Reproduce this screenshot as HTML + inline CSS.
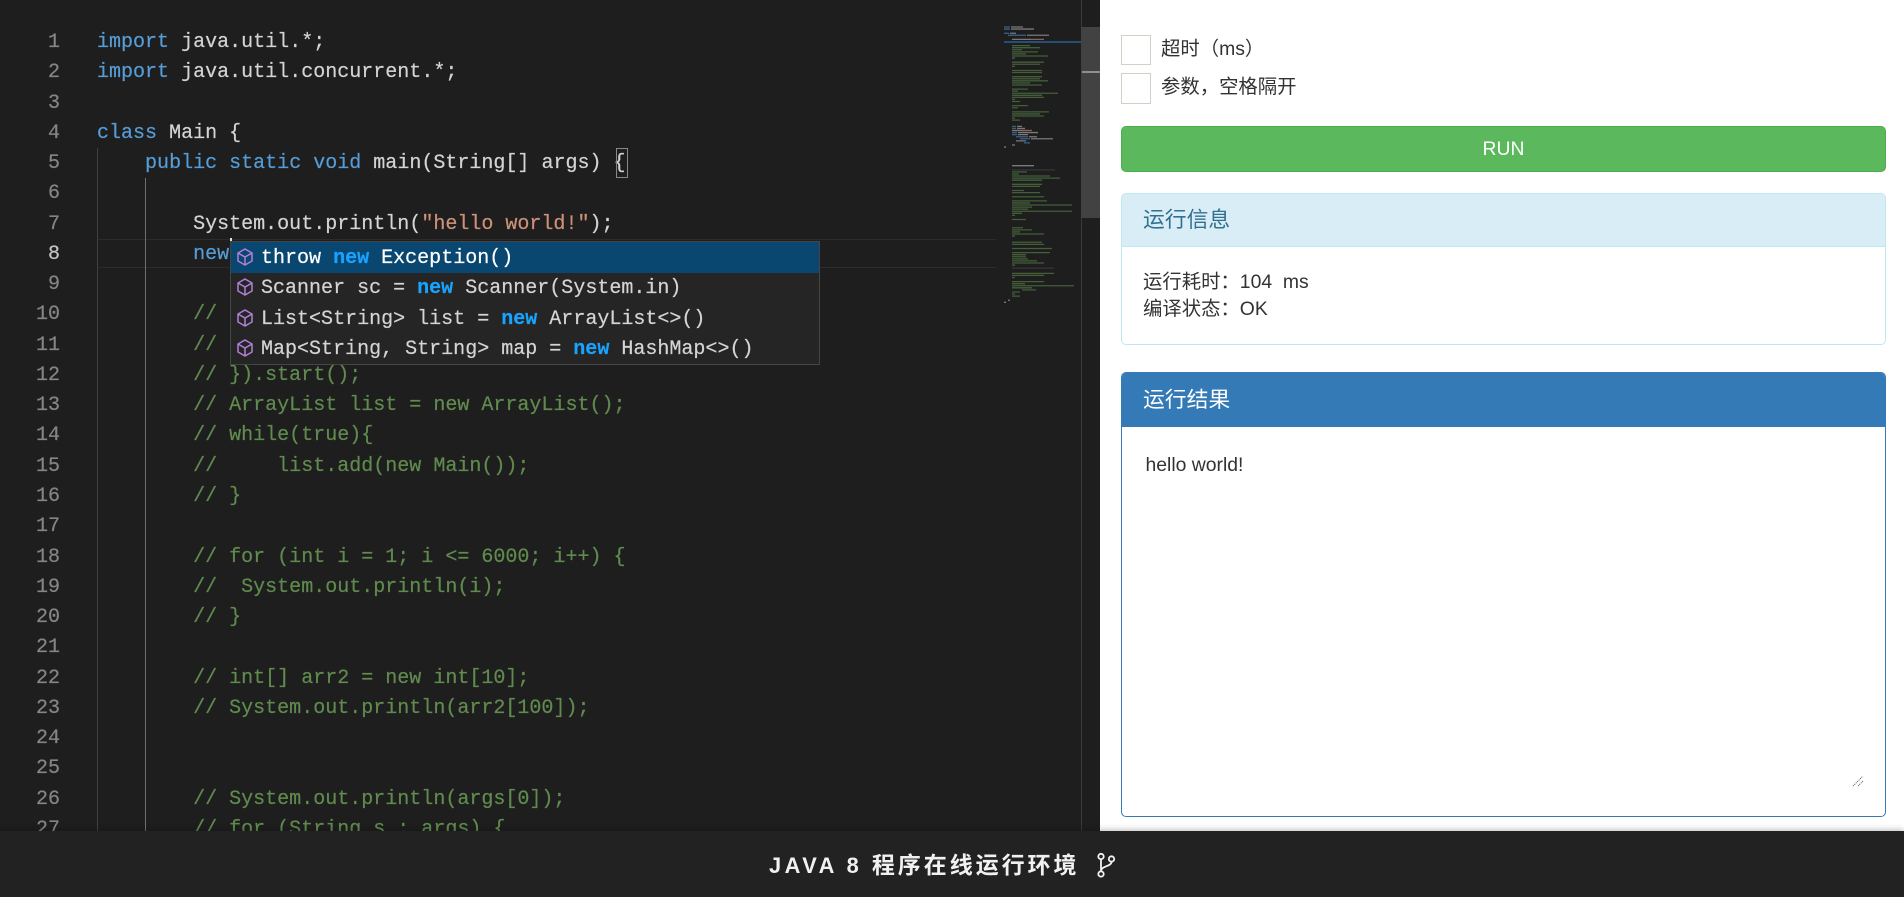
<!DOCTYPE html>
<html lang="zh"><head><meta charset="utf-8"><title>JAVA 8 程序在线运行环境</title>
<style>
html,body{margin:0;padding:0;width:1904px;height:897px;overflow:hidden;background:#fff}
*{box-sizing:border-box}
#ed{position:absolute;left:0;top:0;width:1100px;height:897px;background:#1e1e1e;overflow:hidden}
#nums,#code{position:absolute;top:28px;font:20.03px/30.27px "Liberation Mono","DejaVu Sans Mono",monospace;white-space:pre;-webkit-text-stroke:.2px}
#nums{left:0;width:60px;text-align:right;color:#858585}
#nums b{font-weight:normal;color:#c6c6c6}
#code{left:97px;color:#d4d4d4}
.k{color:#569cd6}.s{color:#ce9178}.c{color:#608b4e}
.g{position:absolute;width:1px;bottom:0}
#cur{position:absolute;left:97px;top:239px;width:899px;height:29px;border-top:1px solid #2c2c2c;border-bottom:1px solid #2c2c2c}
#br{position:absolute;left:616px;top:148px;width:12px;height:30px;border:1px solid #888}
#pop{position:absolute;left:230px;top:241px;width:590px;height:124px;background:#252526;border:1px solid #454545;font:20.03px/34px "Liberation Mono","DejaVu Sans Mono",monospace;color:#d4d4d4;-webkit-text-stroke:.2px}
#pop div{position:relative;height:30.25px;padding-left:30px;white-space:pre}
#pop div.sel{background:#094771;color:#fff;height:31px;margin-bottom:-.75px}
#pop b{color:#18a3ff}
#pop svg{position:absolute;left:4px;top:5px}
#caret{position:absolute;left:230px;top:238px;width:2px;height:4px;background:#e0e0e0}
#sb{position:absolute;left:1081px;top:27px;width:19px;height:191px;background:#424242}
#rl{position:absolute;left:1081px;top:0;width:1px;height:897px;background:#3a3a3a}
#rm{position:absolute;left:1082px;top:71px;width:18px;height:2px;background:#8f8f8f}
#hl{position:absolute;left:1004px;top:41px;width:77px;height:2.4px;background:#264f78}
#rp{position:absolute;left:1100px;top:0;width:804px;height:897px;background:#fff;font:19.36px/26.6px "Liberation Sans","Noto Sans CJK SC",sans-serif;color:#333}
.in{position:absolute;left:21px;width:30px;border:1px solid #d3d0c8;background:#fff}
.lb{position:absolute;left:61px;white-space:pre}
#run{position:absolute;left:21px;top:126px;width:765px;height:46px;background:#5cb85c;border:1px solid #4cae4c;border-radius:5px;color:#fff;text-align:center;line-height:45px}
.panel{position:absolute;left:21px;width:765px;border-radius:5px;background:#fff}
.head{position:absolute;left:0;top:0;width:100%;border-radius:4px 4px 0 0;font-size:21.8px;line-height:52px;padding-left:21px;white-space:pre}
#p1{top:193px;height:152px;border:1px solid #bce8f1}
#p1 .head{height:53px;background:#d9edf7;border-bottom:1px solid #bce8f1;color:#31708f}
#p1 .bd{position:absolute;left:21px;top:75px;white-space:pre}
#p2{top:372px;height:445px;border:1px solid #337ab7}
#p2 .head{height:54px;background:#337ab7;color:#fff;line-height:54px;top:0}
#p2 .bd{position:absolute;left:23.5px;top:79px}
#grip{position:absolute;left:1852px;top:775px}
#ft{position:absolute;left:0;top:831px;width:1904px;height:66px;background:#222;box-shadow:0 -1px 6px rgba(0,0,0,.28)}
#ft .t{position:absolute;left:769px;top:17px;font:bold 21.8px/34px "Liberation Sans","Noto Sans CJK SC",sans-serif;color:#f1f1f1;letter-spacing:3.5px;white-space:pre}
#ft .t span{font-size:23px;letter-spacing:2.95px}
#ft svg{position:absolute;left:1094px;top:19px}
</style></head><body>
<div id="ed">
<div id="cur"></div>
<div class="g" style="left:97px;top:148px;background:#404040"></div>
<div class="g" style="left:145px;top:178px;background:#707070"></div>
<div id="nums">1
2
3
4
5
6
7
<b>8</b>
9
10
11
12
13
14
15
16
17
18
19
20
21
22
23
24
25
26
27</div>
<div id="code"><span class="k">import</span> java.util.*;
<span class="k">import</span> java.util.concurrent.*;

<span class="k">class</span> Main {
    <span class="k">public</span> <span class="k">static</span> <span class="k">void</span> main(String[] args) {

        System.out.println(<span class="s">"hello world!"</span>);
        <span class="k">new</span>

        <span class="c">// new Thread(()-&gt;{</span>
        <span class="c">//     System.out.println();</span>
        <span class="c">// }).start();</span>
        <span class="c">// ArrayList list = new ArrayList();</span>
        <span class="c">// while(true){</span>
        <span class="c">//     list.add(new Main());</span>
        <span class="c">// }</span>

        <span class="c">// for (int i = 1; i &lt;= 6000; i++) {</span>
        <span class="c">//  System.out.println(i);</span>
        <span class="c">// }</span>

        <span class="c">// int[] arr2 = new int[10];</span>
        <span class="c">// System.out.println(arr2[100]);</span>


        <span class="c">// System.out.println(args[0]);</span>
        <span class="c">// for (String s : args) {</span></div>
<div id="br"></div>
<div id="caret"></div>
<div id="pop"><div class="sel"><svg width="20" height="20" viewBox="0 0 20 20" fill="none" stroke="#b180d7" stroke-width="1.5"><path d="M10 2l7 4v8l-7 4-7-4V6zM3 6l7 4 7-4M10 10v8"/></svg>throw <b>new</b> Exception()</div><div><svg width="20" height="20" viewBox="0 0 20 20" fill="none" stroke="#b180d7" stroke-width="1.5"><path d="M10 2l7 4v8l-7 4-7-4V6zM3 6l7 4 7-4M10 10v8"/></svg>Scanner sc = <b>new</b> Scanner(System.in)</div><div><svg width="20" height="20" viewBox="0 0 20 20" fill="none" stroke="#b180d7" stroke-width="1.5"><path d="M10 2l7 4v8l-7 4-7-4V6zM3 6l7 4 7-4M10 10v8"/></svg>List&lt;String&gt; list = <b>new</b> ArrayList&lt;&gt;()</div><div><svg width="20" height="20" viewBox="0 0 20 20" fill="none" stroke="#b180d7" stroke-width="1.5"><path d="M10 2l7 4v8l-7 4-7-4V6zM3 6l7 4 7-4M10 10v8"/></svg>Map&lt;String, String&gt; map = <b>new</b> HashMap&lt;&gt;()</div></div>
<div id="hl"></div>
<svg style="position:absolute;left:0;top:0" width="1100" height="897">
<g transform="translate(1004 27) scale(1 2.07)" fill="none" stroke-width=".62" opacity=".85">
<path stroke="#3f6f9c" d="M0 0h6M0 1h6M0 3h5M4 4h18M8 48h4M8 49h4M8 51h5M8 52h5M12 53h12M16 54h10M20 56h6"/>
<path stroke="#8a8a8a" d="M7 0h12M7 1h23M6 3h6M23 4h22M8 6h19M13 48h5M13 49h8M8 50h16M14 51h20M14 52h10M25 53h8M27 54h22M12 55h10M8 57h3M0 58h2M8 67h22"/>
<path stroke="#a0705a" d="M27 6h13M18 50h10"/>
<path stroke="#4a6a3e" d="M8 9h18M8 10h28M8 11h10M8 12h26M8 13h14M8 14h36M8 15h3M8 17h32M8 18h28M8 19h3M8 21h30M8 22h30M8 24h30M8 25h28M8 26h36M8 27h18M8 28h30M8 30h16M8 31h6M8 32h46M8 33h30M8 34h32M8 35h3M8 36h8M8 38h16M8 39h6M8 41h37M8 42h28M8 43h32M8 44h3M8 45h8M8 70h15M8 71h7M8 72h38M8 73h48M8 74h30M8 76h30M8 77h28M8 79h12M8 80h28M8 82h32M8 84h35M8 85h18M8 86h60M8 87h20M8 88h16M8 89h60M8 90h10M8 91h3M8 93h14M8 97h11M8 98h20M8 99h8M8 100h32M8 101h3M8 104h30M8 105h32M8 107h40M8 109h38M8 110h14M8 111h14M8 112h16M8 113h25M8 114h32M8 115h3M8 119h42M8 120h32M8 121h3M8 123h32M8 124h13M8 125h62M8 126h20M18 127h14M8 128h8M8 129h3M8 130h8"/>
<path stroke="#3a3a3a" d="M8 69h43M8 116.500h42"/>
<path stroke="#8a8a8a" d="M4 132h2M0 133h2"/>
</g></svg>
<div id="rl"></div><div id="sb"></div><div id="rm"></div>
</div>
<div id="rp">
<div class="in" style="top:35px;height:30px"></div>
<div class="lb" style="top:36px">超时（ms）</div>
<div class="in" style="top:73px;height:31px"></div>
<div class="lb" style="top:74px">参数，空格隔开</div>
<div id="run">RUN</div>
<div class="panel" id="p1"><div class="head">运行信息</div><div class="bd">运行耗时：104  ms
编译状态：OK</div></div>
<div class="panel" id="p2"><div class="head">运行结果</div><div class="bd">hello world!</div></div>
</div>
<svg id="grip" width="12" height="12" viewBox="0 0 12 12" stroke="#555" stroke-width="1" stroke-dasharray="1 1"><path d="M1 11L11 1M6 11L11 6"/></svg>
<div id="ft"><div class="t">JAVA 8 <span>程序在线运行环境</span></div>
<svg width="24" height="28" viewBox="0 0 24 28" fill="none" stroke="#f1f1f1" stroke-width="1.8"><circle cx="7" cy="6.500" r="2.700"/><circle cx="17.500" cy="9" r="2.700"/><circle cx="7" cy="24" r="2.700"/><path d="M7 9.200v12M17.500 11.700c0 5-10.500 4-10.500 9.500"/></svg>
</div>
</body></html>
